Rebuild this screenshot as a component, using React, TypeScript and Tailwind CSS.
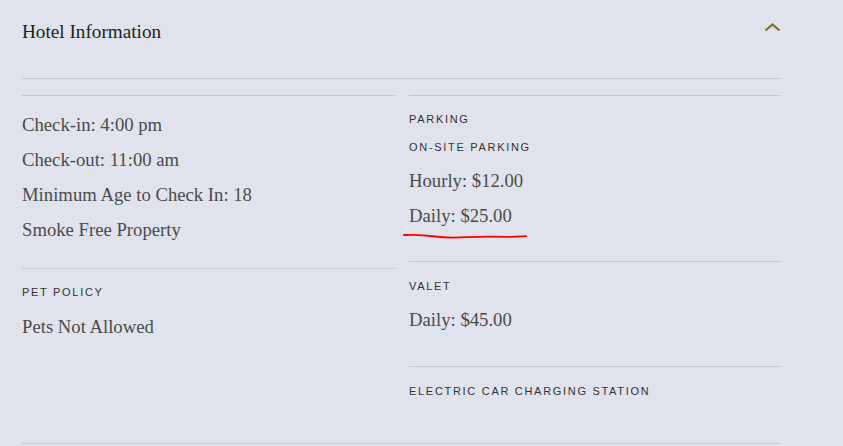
import { ReactNode } from 'react'

const serif = { fontFamily: '"Liberation Serif", "Times New Roman", serif' }
const sans = { fontFamily: '"Liberation Sans", Arial, sans-serif' }

function Label({ children, className = '' }: { children: ReactNode; className?: string }) {
  return (
    <div style={sans} className={`text-[11px] leading-[16px] tracking-[1.7px] uppercase text-[#333] ${className}`}>
      {children}
    </div>
  )
}

function Value({ children, className = '' }: { children: ReactNode; className?: string }) {
  return (
    <div style={serif} className={`text-[18.7px] leading-[35px] text-[#4b4b4b] ${className}`}>
      {children}
    </div>
  )
}

function Underline() {
  return (
    <svg className="absolute left-[-6px] top-[34px]" width="126" height="8" viewBox="0 0 126 8" fill="none">
      <path
        d="M1 3 C 12 2.5, 22 3, 32 4.5 S 50 6, 64 5.2 S 92 4.6, 104 4.8 S 118 4.4, 123 4.2"
        stroke="#ff0000"
        strokeWidth="1.8"
        strokeLinecap="round"
      />
    </svg>
  )
}

export default function App() {
  return (
    <div className="min-h-[446px] bg-[#e0e3ec] px-[22px]">
      <div className="w-[759px]">
        <div className="flex h-[79px] justify-between border-b border-[#c9c9c9]">
          <h2 style={serif} className="pt-[20px] text-[19.2px] leading-[24px] text-[#222]">
            Hotel Information
          </h2>
          <svg className="mt-[23px]" width="17" height="9" viewBox="0 0 17 9" fill="none">
            <path d="M1.5 7.5 L8.5 1.5 L15.5 7.5" stroke="#8a6a2c" strokeWidth="2.2" />
          </svg>
        </div>

        <div className="mt-[16px] grid grid-cols-[373px_372px] gap-x-[14px] border-b border-[#c9c9c9]">
          <div>
            <div className="border-t border-[#c9c9c9] pt-[11px] pb-[21px]">
              <Value>Check-in: 4:00 pm</Value>
              <Value>Check-out: 11:00 am</Value>
              <Value>Minimum Age to Check In: 18</Value>
              <Value>Smoke Free Property</Value>
            </div>
            <div className="border-t border-[#c9c9c9] pt-[15px]">
              <Label>Pet Policy</Label>
              <Value className="mt-[9px]">Pets Not Allowed</Value>
            </div>
          </div>

          <div>
            <div className="border-t border-[#c9c9c9] pt-[15px] pb-[28px]">
              <Label>Parking</Label>
              <Label className="mt-[12px]">On-Site Parking</Label>
              <Value className="mt-[8px]">Hourly: $12.00</Value>
              <div className="relative">
                <Value>Daily: $25.00</Value>
                <Underline />
              </div>
            </div>
            <div className="border-t border-[#c9c9c9] pt-[16px] pb-[29px]">
              <Label>Valet</Label>
              <Value className="mt-[8px]">Daily: $45.00</Value>
            </div>
            <div className="border-t border-[#c9c9c9] pt-[16px] pb-[44px]">
              <Label>Electric Car Charging Station</Label>
            </div>
          </div>
        </div>
      </div>
    </div>
  )
}
